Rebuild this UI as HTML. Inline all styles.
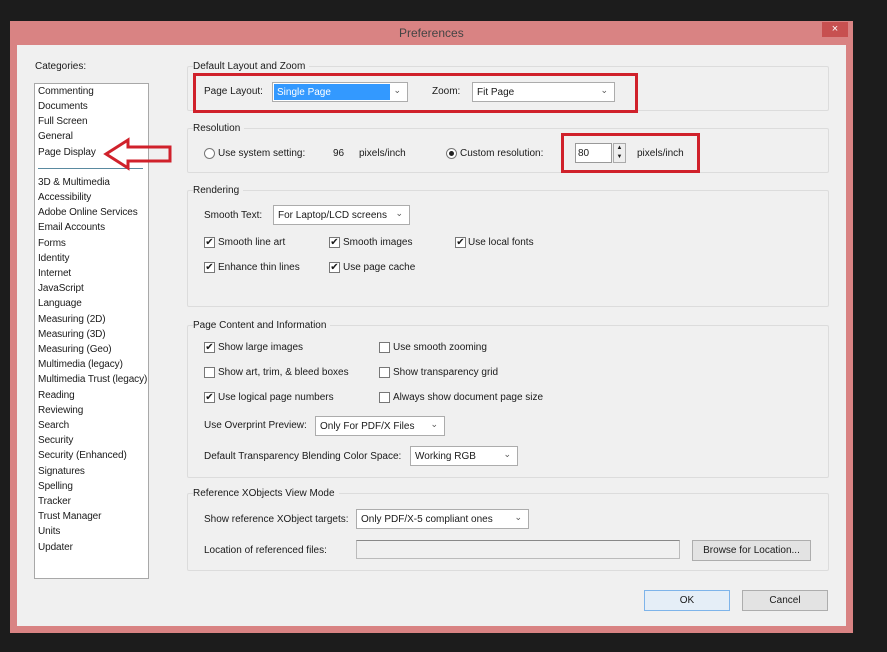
<!DOCTYPE html>
<html><head><style>
*{margin:0;padding:0;box-sizing:border-box}
body{width:887px;height:652px;background:#1c1c1c;font-family:"Liberation Sans",sans-serif;font-size:10px;color:#1a1a1a;position:relative;overflow:hidden}
.a{position:absolute;white-space:nowrap}
#win{position:absolute;left:10px;top:21px;width:843px;height:612px;background:#d98383}
#client{position:absolute;left:17px;top:45px;width:829px;height:581px;background:#f0f0f0}
.grp{position:absolute;left:187px;width:642px;border:1px solid #dcdcdc;border-radius:2px}
.gt{position:absolute;background:#f0f0f0;padding-right:4px}
.sel{position:absolute;height:20px;background:#fff;border:1px solid #acacac}
.sel span{position:absolute;left:4px;top:4px}
.sel i{position:absolute;right:6px;top:2px;font-style:normal;font-size:9px;color:#555}
.cb{position:absolute;width:11px;height:11px;border:1px solid #777;background:#fff;font-size:10px;line-height:9px;text-align:center}
.rb{position:absolute;width:11px;height:11px;border:1px solid #777;border-radius:50%;background:#fff}
.btn{position:absolute;height:21px;background:#e3e3e3;border:1px solid #adadad;text-align:center;line-height:19px}
.red{position:absolute;border:3px solid #d0212b}
.li{position:absolute;left:38px;letter-spacing:-0.1px}
</style></head><body>
<div id="win"></div>
<div class="a" style="left:399px;top:26px;font-size:12px;color:#444">Preferences</div>
<div class="a" style="left:822px;top:22px;width:26px;height:15px;background:#c75050;color:#fff;text-align:center;line-height:14px;font-size:11px">×</div>
<div id="client"></div>

<div class="a" style="left:35px;top:61px">Categories:</div>
<div class="a" style="left:34px;top:83px;width:115px;height:496px;background:#fff;border:1px solid #a8a8a8"></div>
<div class="li a" style="top:86px">Commenting</div>
<div class="li a" style="top:101px">Documents</div>
<div class="li a" style="top:116px">Full Screen</div>
<div class="li a" style="top:131px">General</div>
<div class="li a" style="top:147px">Page Display</div>
<div class="a" style="left:38px;top:168px;width:105px;height:1px;background:#5a8aa0"></div>
<div class="li a" style="top:177px">3D &amp; Multimedia</div>
<div class="li a" style="top:192px">Accessibility</div>
<div class="li a" style="top:207px">Adobe Online Services</div>
<div class="li a" style="top:222px">Email Accounts</div>
<div class="li a" style="top:238px">Forms</div>
<div class="li a" style="top:253px">Identity</div>
<div class="li a" style="top:268px">Internet</div>
<div class="li a" style="top:283px">JavaScript</div>
<div class="li a" style="top:298px">Language</div>
<div class="li a" style="top:314px">Measuring (2D)</div>
<div class="li a" style="top:329px">Measuring (3D)</div>
<div class="li a" style="top:344px">Measuring (Geo)</div>
<div class="li a" style="top:359px">Multimedia (legacy)</div>
<div class="li a" style="top:374px">Multimedia Trust (legacy)</div>
<div class="li a" style="top:390px">Reading</div>
<div class="li a" style="top:405px">Reviewing</div>
<div class="li a" style="top:420px">Search</div>
<div class="li a" style="top:435px">Security</div>
<div class="li a" style="top:450px">Security (Enhanced)</div>
<div class="li a" style="top:466px">Signatures</div>
<div class="li a" style="top:481px">Spelling</div>
<div class="li a" style="top:496px">Tracker</div>
<div class="li a" style="top:511px">Trust Manager</div>
<div class="li a" style="top:526px">Units</div>
<div class="li a" style="top:542px">Updater</div>
<svg class="a" style="left:100px;top:136px" width="75" height="36"><path d="M6 18 L28 4 L28 11 L70 11 L70 25 L28 25 L28 32 Z" fill="none" stroke="#d0212b" stroke-width="3" stroke-linejoin="miter"/></svg>

<div class="grp" style="top:66px;height:45px"></div>
<div class="gt a" style="left:193px;top:61px">Default Layout and Zoom</div>
<div class="red" style="left:193px;top:73px;width:445px;height:40px"></div>
<div class="a" style="left:204px;top:86px">Page Layout:</div>
<div class="sel" style="left:272px;top:82px;width:136px"><span style="left:1px;top:1px;width:116px;height:16px;background:#3399ff;color:#fff;padding:3px 3px">Single Page</span><i>⌄</i></div>
<div class="a" style="left:432px;top:86px">Zoom:</div>
<div class="sel" style="left:472px;top:82px;width:143px"><span>Fit Page</span><i>⌄</i></div>

<div class="grp" style="top:128px;height:45px"></div>
<div class="gt a" style="left:193px;top:123px">Resolution</div>
<div class="rb" style="left:204px;top:148px"></div>
<div class="a" style="left:218px;top:148px">Use system setting:</div>
<div class="a" style="left:333px;top:148px">96</div>
<div class="a" style="left:359px;top:148px">pixels/inch</div>
<div class="rb" style="left:446px;top:148px"><div style="position:absolute;left:2px;top:2px;width:5px;height:5px;border-radius:50%;background:#222"></div></div>
<div class="a" style="left:460px;top:148px">Custom resolution:</div>
<div class="red" style="left:561px;top:133px;width:139px;height:40px"></div>
<div class="a" style="left:575px;top:143px;width:37px;height:20px;background:#fff;border:1px solid #999;padding:4px 2px">80</div>
<div class="a" style="left:613px;top:143px;width:13px;height:20px;border:1px solid #aaa;background:#eee;font-size:6px;text-align:center;line-height:9px">▲<br>▼</div>
<div class="a" style="left:637px;top:148px">pixels/inch</div>

<div class="grp" style="top:190px;height:117px"></div>
<div class="gt a" style="left:193px;top:185px">Rendering</div>
<div class="a" style="left:204px;top:210px">Smooth Text:</div>
<div class="sel" style="left:273px;top:205px;width:137px"><span>For Laptop/LCD screens</span><i>⌄</i></div>
<div class="cb" style="left:204px;top:237px">✔</div><div class="a" style="left:218px;top:237px">Smooth line art</div>
<div class="cb" style="left:329px;top:237px">✔</div><div class="a" style="left:343px;top:237px">Smooth images</div>
<div class="cb" style="left:455px;top:237px">✔</div><div class="a" style="left:468px;top:237px">Use local fonts</div>
<div class="cb" style="left:204px;top:262px">✔</div><div class="a" style="left:218px;top:262px">Enhance thin lines</div>
<div class="cb" style="left:329px;top:262px">✔</div><div class="a" style="left:343px;top:262px">Use page cache</div>

<div class="grp" style="top:325px;height:153px"></div>
<div class="gt a" style="left:193px;top:320px">Page Content and Information</div>
<div class="cb" style="left:204px;top:342px">✔</div><div class="a" style="left:218px;top:342px">Show large images</div>
<div class="cb" style="left:379px;top:342px"></div><div class="a" style="left:393px;top:342px">Use smooth zooming</div>
<div class="cb" style="left:204px;top:367px"></div><div class="a" style="left:218px;top:367px">Show art, trim, &amp; bleed boxes</div>
<div class="cb" style="left:379px;top:367px"></div><div class="a" style="left:393px;top:367px">Show transparency grid</div>
<div class="cb" style="left:204px;top:392px">✔</div><div class="a" style="left:218px;top:392px">Use logical page numbers</div>
<div class="cb" style="left:379px;top:392px"></div><div class="a" style="left:393px;top:392px">Always show document page size</div>
<div class="a" style="left:204px;top:420px">Use Overprint Preview:</div>
<div class="sel" style="left:315px;top:416px;width:130px"><span>Only For PDF/X Files</span><i>⌄</i></div>
<div class="a" style="left:204px;top:451px">Default Transparency Blending Color Space:</div>
<div class="sel" style="left:410px;top:446px;width:108px"><span>Working RGB</span><i>⌄</i></div>

<div class="grp" style="top:493px;height:78px"></div>
<div class="gt a" style="left:193px;top:488px">Reference XObjects View Mode</div>
<div class="a" style="left:204px;top:514px">Show reference XObject targets:</div>
<div class="sel" style="left:356px;top:509px;width:173px"><span>Only PDF/X-5 compliant ones</span><i>⌄</i></div>
<div class="a" style="left:204px;top:545px">Location of referenced files:</div>
<div class="a" style="left:356px;top:540px;width:324px;height:19px;background:#f0f0f0;border:1px solid #bbb;border-top-color:#888"></div>
<div class="btn" style="left:692px;top:540px;width:119px">Browse for Location...</div>

<div class="btn" style="left:644px;top:590px;width:86px;border-color:#7eb4ea;background:#e5eef7">OK</div>
<div class="btn" style="left:742px;top:590px;width:86px">Cancel</div>
</body></html>
